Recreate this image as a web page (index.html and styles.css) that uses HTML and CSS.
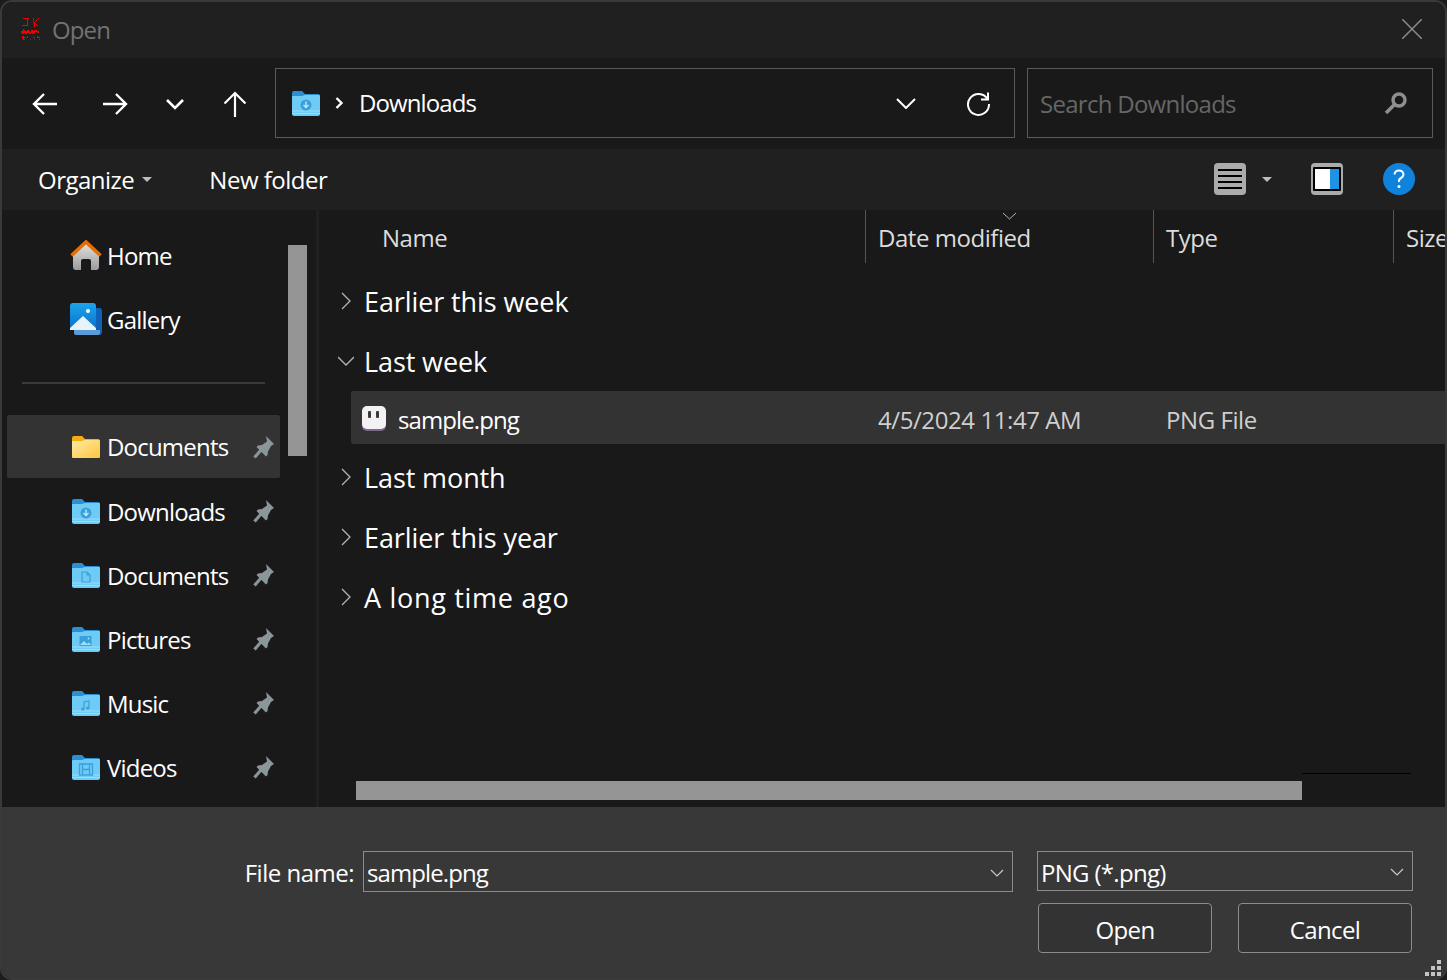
FILE: index.html
```html
<!DOCTYPE html>
<html lang="en">
<head>
  <meta charset="UTF-8" />
  <title>Open</title>
  <link rel="stylesheet" href="styles.css">
</head>
<body>
  <svg class="defs" width="0" height="0">
    <symbol id="folder" viewBox="0 0 28 25">
      <path d="M0 2q0-2 2-2h8l3 3h13q2 0 2 2v6H0z" fill="#2b8fd2"/>
      <path d="M0 6q0-1 1-1h9l3-1h14q1 0 1 1v18q0 2-2 2H2q-2 0-2-2z" fill="#6ecbf6"/>
      <path d="M0 20h28M0 22.500h28" stroke="#9fdcf9" stroke-width="1"/>
    </symbol>
    <symbol id="pin" viewBox="0 0 21 23">
      <path d="M13 0l8 8-3 2-3 5.500-.5 3.500-1.500 1.500-9.500-9.500 1.500-1.500 4-.5 5-3.500z" fill="#8b959c"/>
      <path d="M8 14l-6.500 7.500" stroke="#8b959c" stroke-width="3.200" fill="none"/>
    </symbol>
  </svg>

  <div class="window">
    <div class="titlebar">
      <svg class="app-icon" width="22" height="24" viewBox="0 0 22 24" fill="#f00000">
        <path d="M3 1h6v1H8v7H2V8h5V2H3zM13 1h1v4h1V4h1V3h1V2h1V1h1v1h-1v1h-1v1h-1v1h-1v1h1v1h1v1h1v1h-1V8h-1V7h-1v3h-1z"/>
        <path d="M3 12h1v1h1v1h2v-1h2v1h1v1h1v-2h2v1h1v-1h3v1h2v2h-2v-1h-2v1h-1v1h-2v-1h-1v1H9v-1H7v1H5v-1H4v1H2v-1H1v-2h2z"/>
        <path d="M2 19h2v1h2v1H4v1h1v1H3v-1H2zM7 19h1v2H7zM13 20h2v1h-2zM14 22h1v1h-1zM17 19h1v1h2v1h-3zM10 22h1v1h-1zM19 22h1v1h-1z"/>
      </svg>
      <span class="title">Open</span>
      <svg class="close" width="20" height="20" viewBox="0 0 20 20" stroke="#8a8a8a" stroke-width="1.500">
        <path d="M0 0l20 20M20 0L0 20"/>
      </svg>
    </div>

    <div class="navbar">
      <div class="nav-btn wide">
        <svg width="26" height="24" viewBox="0 0 26 24" fill="none" stroke="#fff" stroke-width="2.400"><path d="M25 12H2M12 2L2 12l10 10"/></svg>
      </div>
      <div class="nav-btn wide">
        <svg width="26" height="24" viewBox="0 0 26 24" fill="none" stroke="#fff" stroke-width="2.400"><path d="M1 12h23M14 2l10 10-10 10"/></svg>
      </div>
      <div class="nav-btn narrow">
        <svg width="18" height="11" viewBox="0 0 18 11" fill="none" stroke="#fff" stroke-width="2.600"><path d="M1 1l8 8 8-8"/></svg>
      </div>
      <div class="nav-btn wide">
        <svg width="24" height="26" viewBox="0 0 24 26" fill="none" stroke="#fff" stroke-width="2.200"><path d="M12 26V2M1.500 12.500L12 2l10.500 10.500"/></svg>
      </div>
      <div class="address">
        <svg class="addr-folder" width="28" height="25"><use href="#folder"/><circle cx="14" cy="14" r="5.500" fill="#3aa0dc"/><path d="M14 10.500v6M11.500 14l2.500 2.500 2.500-2.500" stroke="#bfe8fb" stroke-width="1.400" fill="none"/></svg>
        <svg class="crumb" width="9" height="12" viewBox="0 0 9 12" fill="none" stroke="#fff" stroke-width="2.400"><path d="M1.500 1l5 5-5 5"/></svg>
        <span class="addr-text">Downloads</span>
        <svg class="addr-drop" width="20" height="11" viewBox="0 0 20 11" fill="none" stroke="#fff" stroke-width="2"><path d="M1 1l9 9 9-9"/></svg>
        <svg class="refresh" width="24" height="25" viewBox="0 0 24 25" fill="none" stroke="#fff" stroke-width="2"><path d="M21.500 8A10.500 10.500 0 1 0 23 13M22 1.500V8.500H15"/></svg>
      </div>
      <div class="search">
        <span class="search-text">Search Downloads</span>
        <svg width="24" height="24" viewBox="0 0 24 24" fill="none" stroke="#8f8f8f"><circle cx="15" cy="9" r="6" stroke-width="3.400"/><path d="M10 14l-8 8" stroke-width="3.600"/></svg>
      </div>
    </div>

    <div class="toolbar">
      <span class="tool-label">Organize</span>
      <span class="caret caret-organize"></span>
      <span class="tool-label newfolder">New folder</span>
      <div class="tool-right">
        <svg width="32" height="32" viewBox="0 0 32 32"><rect width="32" height="32" rx="4" fill="#ababab"/><path d="M4 7h24M4 13h24M4 19h24M4 25h24" stroke="#000" stroke-width="2"/></svg>
        <span class="caret caret-view"></span>
        <svg class="preview-icon" width="32" height="32" viewBox="0 0 32 32"><rect width="32" height="32" rx="4" fill="#ababab"/><rect x="2" y="4" width="28" height="24" rx="1" fill="#000"/><rect x="4" y="6" width="15" height="20" fill="#fff"/><rect x="19" y="6" width="9" height="20" fill="#1e93e4"/></svg>
        <svg class="help-icon" width="32" height="32" viewBox="0 0 32 32"><circle cx="16" cy="16" r="16" fill="#0f82dc"/><path d="M11.500 11.500q.5-4 4.500-4t4.500 3.800q0 2.400-2.500 3.700t-2 4" fill="none" stroke="#fff" stroke-width="2"/><circle cx="16" cy="23.500" r="1.500" fill="#fff"/></svg>
      </div>
    </div>

    <div class="main">
      <div class="sidebar">
        <div class="side-item">
          <svg class="side-icon" width="32" height="30" viewBox="0 0 32 30">
            <defs><linearGradient id="houseFill" x1="0" y1="0" x2="0" y2="1"><stop offset="0" stop-color="#e4e4e4"/><stop offset="1" stop-color="#9c9c9c"/></linearGradient></defs>
            <path d="M3 14L16 2l13 12v13q0 3-3 3h-5v-9q0-2-2-2h-6q-2 0-2 2v9H6q-3 0-3-3z" fill="url(#houseFill)"/>
            <path d="M1.500 15.500L16 2l14.500 13.500" fill="none" stroke="#e56f00" stroke-width="3.600"/>
          </svg>
          <span>Home</span>
        </div>
        <div class="side-item">
          <svg class="side-icon" width="32" height="32" viewBox="0 0 32 32">
            <defs><linearGradient id="galleryFill" x1="0" y1="0" x2="0" y2="1"><stop offset="0" stop-color="#1aa5ec"/><stop offset="1" stop-color="#0a6fc9"/></linearGradient></defs>
            <rect x="4" y="5" width="28" height="27" rx="3" fill="#0f62b8"/>
            <path d="M4 27h26v3q0 2-2 2H6q-2 0-2-2z" fill="#5b9bd8"/>
            <rect width="26" height="27" rx="3" fill="url(#galleryFill)"/>
            <circle cx="18" cy="8" r="2" fill="#fff"/>
            <path d="M0 25L13 13l13 12v-1 3H0z" fill="#e8f2fb"/>
          </svg>
          <span>Gallery</span>
        </div>

        <div class="side-sep"></div>

        <div class="side-item selected">
          <svg class="side-folder" width="28" height="22" viewBox="0 0 28 22">
            <defs><linearGradient id="yellowFill" x1="0" y1="0" x2="1" y2="1"><stop offset="0" stop-color="#ffe9a6"/><stop offset="1" stop-color="#ffc83d"/></linearGradient></defs>
            <path d="M0 2q0-2 2-2h8l3 3h13q2 0 2 2v6H0z" fill="#f5ad14"/>
            <path d="M0 6q0-1 1-1h9l3-1h14q1 0 1 1v16q0 1-1 1H1q-1 0-1-1z" fill="url(#yellowFill)"/>
          </svg>
          <span>Documents</span>
          <svg class="pin" width="21" height="23"><use href="#pin"/></svg>
        </div>
        <div class="side-item">
          <svg class="side-folder" width="28" height="25"><use href="#folder"/><circle cx="14" cy="14" r="5.500" fill="#3aa0dc"/><path d="M14 10.500v6M11.500 14l2.500 2.500 2.500-2.500" stroke="#bfe8fb" stroke-width="1.400" fill="none"/></svg>
          <span>Downloads</span>
          <svg class="pin" width="21" height="23"><use href="#pin"/></svg>
        </div>
        <div class="side-item">
          <svg class="side-folder" width="28" height="25"><use href="#folder"/><path d="M10 9h5l3 3v7h-8zM15 9v3h3" fill="none" stroke="#3aa0dc" stroke-width="1.200"/></svg>
          <span>Documents</span>
          <svg class="pin" width="21" height="23"><use href="#pin"/></svg>
        </div>
        <div class="side-item">
          <svg class="side-folder" width="28" height="25"><use href="#folder"/><rect x="7.500" y="9" width="12" height="10" fill="#3aa0dc"/><path d="M8 18l4-4 3 3 2-1.500 2 2.500z" fill="#a5e0fa"/><circle cx="16.500" cy="11.500" r="1" fill="#a5e0fa"/></svg>
          <span>Pictures</span>
          <svg class="pin" width="21" height="23"><use href="#pin"/></svg>
        </div>
        <div class="side-item">
          <svg class="side-folder" width="28" height="25"><use href="#folder"/><path d="M12 18V11l5-1v7" fill="none" stroke="#3aa0dc" stroke-width="1.200"/><circle cx="10.800" cy="18" r="1.600" fill="#3aa0dc"/><circle cx="15.800" cy="17" r="1.600" fill="#3aa0dc"/></svg>
          <span>Music</span>
          <svg class="pin" width="21" height="23"><use href="#pin"/></svg>
        </div>
        <div class="side-item">
          <svg class="side-folder" width="28" height="25"><use href="#folder"/><path d="M7.500 9h13v11h-13zM10.500 9v11M17.500 9v11M10.500 14.500h7" fill="none" stroke="#3aa0dc" stroke-width="1.300"/></svg>
          <span>Videos</span>
          <svg class="pin" width="21" height="23"><use href="#pin"/></svg>
        </div>
        <div class="side-scroll"></div>
      </div>

      <div class="content">
        <div class="columns">
          <div class="col col-name">Name</div>
          <div class="col col-date">Date modified
            <svg class="sort" width="15" height="8" viewBox="0 0 15 8" fill="none" stroke="#b5b5b5"><path d="M1 1l6.500 6L14 1"/></svg>
          </div>
          <div class="col col-type">Type</div>
          <div class="col col-size">Size</div>
        </div>

        <div class="group">
          <svg class="arrow" width="16" height="18" viewBox="0 0 16 18" fill="none" stroke="#b5b5b5" stroke-width="1.300"><path d="M4 1l8 8-8 8"/></svg>
          <span>Earlier this week</span>
        </div>
        <div class="group">
          <svg class="arrow" width="16" height="18" viewBox="0 0 16 18" fill="none" stroke="#b5b5b5" stroke-width="1.300"><path d="M0 5l8 8 8-8"/></svg>
          <span>Last week</span>
        </div>
        <div class="file-row">
          <svg class="file-icon" width="24" height="25" viewBox="0 0 24 25">
            <rect y="1" width="24" height="24" rx="5" fill="#7d6a8a"/>
            <rect width="24" height="23" rx="5" fill="#f3f1f4"/>
            <rect x="6" y="5" width="3" height="7" rx="1" fill="#3a3a3a"/>
            <rect x="14" y="5" width="3" height="7" rx="1" fill="#3a3a3a"/>
          </svg>
          <span class="file-name">sample.png</span>
          <span class="file-date">4/5/2024 11:47 AM</span>
          <span class="file-type">PNG File</span>
        </div>
        <div class="group">
          <svg class="arrow" width="16" height="18" viewBox="0 0 16 18" fill="none" stroke="#b5b5b5" stroke-width="1.300"><path d="M4 1l8 8-8 8"/></svg>
          <span>Last month</span>
        </div>
        <div class="group">
          <svg class="arrow" width="16" height="18" viewBox="0 0 16 18" fill="none" stroke="#b5b5b5" stroke-width="1.300"><path d="M4 1l8 8-8 8"/></svg>
          <span>Earlier this year</span>
        </div>
        <div class="group">
          <svg class="arrow" width="16" height="18" viewBox="0 0 16 18" fill="none" stroke="#b5b5b5" stroke-width="1.300"><path d="M4 1l8 8-8 8"/></svg>
          <span class="long-ago">A long time ago</span>
        </div>

        <div class="hline"></div>
        <div class="hscroll"></div>
      </div>
    </div>

    <div class="footer">
      <div class="footer-row">
        <label class="name-label" for="fname">File name:</label>
        <div class="combo name-combo">
          <span id="fname">sample.png</span>
          <svg width="14" height="8" viewBox="0 0 14 8" fill="none" stroke="#c8c8c8" stroke-width="1.200"><path d="M1 1l6 6 6-6"/></svg>
        </div>
        <div class="combo type-combo">
          <span>PNG (*.png)</span>
          <svg width="14" height="8" viewBox="0 0 14 8" fill="none" stroke="#c8c8c8" stroke-width="1.200"><path d="M1 1l6 6 6-6"/></svg>
        </div>
      </div>
      <div class="footer-buttons">
        <button class="btn">Open</button>
        <button class="btn">Cancel</button>
      </div>
      <svg class="grip" width="17" height="17" viewBox="0 0 17 17" fill="#c4c4c4">
        <rect x="12" width="4" height="4"/><rect x="6" y="6" width="4" height="4"/><rect x="12" y="6" width="4" height="4"/>
        <rect y="12" width="4" height="4"/><rect x="6" y="12" width="4" height="4"/><rect x="12" y="12" width="4" height="4"/>
      </svg>
    </div>
  </div>
</body>
</html>
```

FILE: styles.css
```css
* {
  box-sizing: border-box;
}

html, body {
  margin: 0;
  height: 980px;
  background: #1c1c1c;
  overflow: hidden;
}

body {
  font-family: "Open Sans", "Noto Sans", sans-serif;
  font-size: 24px;
  letter-spacing: -0.9px;
  color: #fff;
}

.defs {
  position: absolute;
}

.window {
  width: 1447px;
  height: 980px;
  border: 2px solid #3a3a3a;
  border-radius: 12px;
  display: flex;
  flex-direction: column;
  overflow: hidden;
  background: #191919;
}

/* title */
.titlebar {
  height: 56px;
  flex: none;
  background: #202020;
  display: flex;
  align-items: center;
  padding: 0 23px 2px 18px;
}

.app-icon {
  margin-right: 10px;
}

.title {
  color: #727272;
}

.close {
  margin-left: auto;
}

/* back, forward, address, search */
.navbar {
  height: 91px;
  flex: none;
  background: #191919;
  display: flex;
  align-items: flex-start;
  padding: 10px 0 0 8px;
}

.nav-btn {
  height: 70px;
  padding-top: 2px;
  display: flex;
  align-items: center;
  justify-content: center;
  flex: none;
}

.nav-btn.wide {
  width: 70px;
}

.nav-btn.narrow {
  width: 50px;
}

.address, .search {
  height: 70px;
  border: 1px solid #5a5a5a;
  display: flex;
  align-items: center;
  flex: none;
}

.address {
  width: 740px;
  margin-left: 5px;
  padding-left: 16px;
}

.crumb {
  margin: 0 15px 0 15px;
}

.addr-text {
  margin-bottom: 2px;
}

.addr-drop {
  margin-left: auto;
}

.refresh {
  margin: 0 24px 0 50px;
}

.search {
  width: 406px;
  margin-left: 12px;
  padding: 0 24px 0 12px;
  justify-content: space-between;
}

.search-text {
  color: #666;
  letter-spacing: -0.72px;
}

/* organize bar */
.toolbar {
  height: 61px;
  flex: none;
  background: #202020;
  display: flex;
  align-items: center;
  padding: 0 30px 1px 36px;
}

.tool-label {
  letter-spacing: -0.5px;
  margin-top: 1px;
}

.caret {
  width: 0;
  height: 0;
  border-left: 5px solid transparent;
  border-right: 5px solid transparent;
  border-top: 5px solid #bdbdbd;
}

.caret-organize {
  margin-left: 8px;
}

.newfolder {
  margin-left: 57px;
}

.tool-right {
  margin-left: auto;
  display: flex;
  align-items: center;
}

.caret-view {
  margin-left: 16px;
}

.preview-icon {
  margin-left: 39px;
}

.help-icon {
  margin-left: 40px;
}

/* nav pane and file list */
.main {
  flex: 1;
  min-height: 0;
  display: flex;
  background: #191919;
}

.sidebar {
  width: 317px;
  flex: none;
  padding: 15px 0 0 5px;
  border-right: 3px solid #202020;
  position: relative;
  overflow: hidden;
  letter-spacing: -0.8px;
}

.side-item {
  width: 273px;
  height: 64px;
  display: flex;
  align-items: center;
  position: relative;
  padding-left: 70px;
}

.side-item span {
  margin-left: 4px;
  margin-bottom: 4px;
}

.side-icon {
  margin-left: -7px;
  margin-right: 1px;
  margin-bottom: 4px;
}

.side-item .side-folder + span {
  margin-left: 7px;
}

.side-folder {
  margin-left: -5px;
  margin-bottom: 3px;
}

.side-item.selected {
  background: #333;
  border-radius: 2px;
  height: 63px;
  margin-top: -2px;
  margin-bottom: 3px;
  padding-top: 4px;
}

.pin {
  position: absolute;
  right: 6px;
  top: 19px;
}

.side-item.selected .pin {
  top: 21px;
}

.side-sep {
  height: 2px;
  width: 243px;
  margin: 29px 0 33px 15px;
  background: #3a3a3a;
}

.side-scroll {
  position: absolute;
  left: 286px;
  top: 35px;
  width: 19px;
  height: 211px;
  background: #959595;
}

.content {
  flex: 1;
  min-width: 0;
  position: relative;
  overflow: hidden;
}

.columns {
  height: 53px;
  margin-bottom: 9px;
  display: flex;
  color: #dcdcdc;
  letter-spacing: -0.45px;
}

.col {
  height: 53px;
  padding: 11px 0 0 12px;
  border-right: 1px solid #555;
  flex: none;
  position: relative;
  white-space: nowrap;
}

.col-name {
  width: 547px;
  padding-left: 63px;
}

.col-date {
  width: 288px;
}

.col-type {
  width: 240px;
}

.col-size {
  width: 60px;
  border-right: 0;
}

.sort {
  position: absolute;
  left: 136px;
  top: 2px;
}

.group {
  height: 60px;
  display: flex;
  align-items: center;
  font-size: 27px;
  letter-spacing: -0.1px;
  padding-left: 19px;
}

.group .arrow {
  flex: none;
  margin-right: 10px;
  margin-top: -2px;
}

.group span {
  margin-top: -2px;
}

.group .long-ago {
  letter-spacing: 0.7px;
}

.file-row {
  height: 53px;
  margin: -1px 0 4px 32px;
  background: #333;
  border-radius: 2px 0 0 2px;
  display: flex;
  align-items: center;
  padding-left: 11px;
  position: relative;
}

.file-icon {
  margin-top: 2px;
}

.file-name {
  margin-left: 12px;
  margin-top: 4px;
}

.file-date, .file-type {
  color: #cfcfcf;
  position: absolute;
  top: 12px;
  letter-spacing: -0.42px;
}

.file-date {
  left: 527px;
}

.file-type {
  left: 815px;
}

.hline {
  position: absolute;
  left: 983px;
  top: 563px;
  width: 109px;
  height: 1px;
  background: #000;
}

.hscroll {
  position: absolute;
  left: 37px;
  top: 571px;
  width: 946px;
  height: 19px;
  background: #959595;
}

/* file name and buttons */
.footer {
  flex: none;
  height: 171px;
  background: #383838;
  position: relative;
  padding: 44px 32px 0 0;
}

.footer-row {
  display: flex;
  align-items: flex-start;
  justify-content: flex-end;
}

.name-label {
  margin-right: 9px;
  line-height: 43px;
  letter-spacing: -0.5px;
}

.combo {
  border: 1px solid #8c8c8c;
  display: flex;
  align-items: center;
  justify-content: space-between;
  padding: 2px 8px 0 3px;
}

.name-combo {
  width: 650px;
  height: 41px;
  margin-right: 24px;
}

.type-combo {
  width: 376px;
  height: 40px;
  letter-spacing: -0.7px;
}

.footer-buttons {
  display: flex;
  justify-content: flex-end;
  gap: 26px;
  margin-top: 9px;
  padding-right: 1px;
}

.btn {
  width: 174px;
  height: 50px;
  background: #333;
  border: 1px solid #8c8c8c;
  border-radius: 4px;
  color: #fff;
  font: inherit;
  letter-spacing: -0.6px;
  padding: 2px 0 0;
}

.grip {
  position: absolute;
  right: 3px;
  bottom: 1px;
}
```
